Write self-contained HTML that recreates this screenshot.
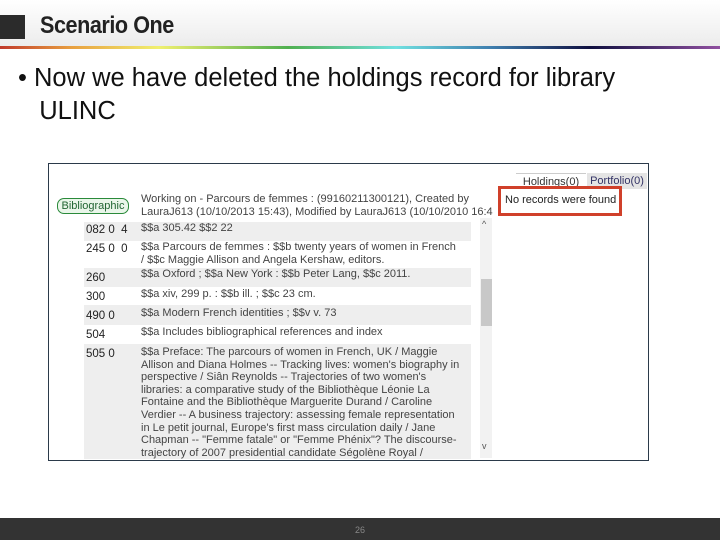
<!DOCTYPE html>
<html><head><meta charset="utf-8"><style>
body{margin:0;width:720px;height:540px;position:relative;overflow:hidden;background:#fff;font-family:"Liberation Sans",sans-serif}
.a{position:absolute}
.hdr{left:0;top:0;width:720px;height:46px;background:linear-gradient(#fff,#ececec)}
.bar{left:0;top:46px;width:720px;height:3px;background:linear-gradient(90deg,#c0392b,#e8a040 10%,#f0f070 22%,#50b050 40%,#70e0e0 55%,#4080b0 68%,#101040 82%,#9050a0 100%)}
.t{font-size:11px;color:#444;line-height:12.6px;white-space:nowrap;overflow:hidden}
.w{width:338px}
.n{font-size:11.5px;color:#222;left:86px}
.g{background:#eee;left:84px;width:387px}
</style></head><body>
<div class="a hdr"></div>
<div class="a" style="left:0;top:15px;width:25px;height:24px;background:#2b2b2b"></div>
<div class="a" style="left:40px;top:12px;font-size:24px;color:#222;font-weight:bold;letter-spacing:-0.5px;transform:scaleX(0.9);transform-origin:left">Scenario One</div>
<div class="a bar"></div>
<div class="a" style="left:18px;top:62px;font-size:25.5px;color:#111;line-height:33px">• Now we have deleted the holdings record for library<br>&nbsp;&nbsp;&nbsp;ULINC</div>

<div class="a" style="left:48px;top:163px;width:599px;height:296px;border:1px solid #2b3a4a;background:#fff"></div>
<div class="a g" style="top:222px;height:19px"></div>
<div class="a g" style="top:268px;height:19px"></div>
<div class="a g" style="top:305px;height:20px"></div>
<div class="a g" style="top:344px;height:115px"></div>
<div class="a" style="left:57px;top:198px;width:70px;height:14px;border:1px solid #2a8a3a;border-radius:7px;background:#eaf6ea;font-size:11px;color:#226633;text-align:center;line-height:14px">Bibliographic</div>
<div class="a t" style="left:141px;top:193px;width:352px">Working on - Parcours de femmes : (99160211300121), Created by<br>LauraJ613 (10/10/2013 15:43), Modified by LauraJ613 (10/10/2010 16:40)</div>
<div class="a n t" style="top:224px">082 0 &nbsp;4</div>
<div class="a n t" style="top:243px">245 0 &nbsp;0</div>
<div class="a n t" style="top:272px">260</div>
<div class="a n t" style="top:291px">300</div>
<div class="a n t" style="top:310px">490 0</div>
<div class="a n t" style="top:329px">504</div>
<div class="a n t" style="top:348px">505 0</div>
<div class="a t w" style="left:141px;top:222px">$$a 305.42 $$2 22</div>
<div class="a t w" style="left:141px;top:241px">$$a Parcours de femmes : $$b twenty years of women in French<br>/ $$c Maggie Allison and Angela Kershaw, editors.</div>
<div class="a t w" style="left:141px;top:268px">$$a Oxford ; $$a New York : $$b Peter Lang, $$c 2011.</div>
<div class="a t w" style="left:141px;top:288px">$$a xiv, 299 p. : $$b ill. ; $$c 23 cm.</div>
<div class="a t w" style="left:141px;top:307px">$$a Modern French identities ; $$v v. 73</div>
<div class="a t w" style="left:141px;top:326px">$$a Includes bibliographical references and index</div>
<div class="a t w" style="left:141px;top:346px;height:113px">$$a Preface: The parcours of women in French, UK / Maggie<br>Allison and Diana Holmes -- Tracking lives: women's biography in<br>perspective / Siân Reynolds -- Trajectories of two women's<br>libraries: a comparative study of the Bibliothèque Léonie La<br>Fontaine and the Bibliothèque Marguerite Durand / Caroline<br>Verdier -- A business trajectory: assessing female representation<br>in Le petit journal, Europe's first mass circulation daily / Jane<br>Chapman -- "Femme fatale" or "Femme Phénix"? The discourse-<br>trajectory of 2007 presidential candidate Ségolène Royal /</div>
<div class="a" style="left:480px;top:218px;width:12px;height:240px;background:#f2f2f2"></div>
<div class="a" style="left:481px;top:279px;width:11px;height:47px;background:#c8c8c8"></div>
<div class="a" style="left:482px;top:219px;font-size:9px;color:#555">^</div>
<div class="a" style="left:482px;top:441px;font-size:9px;color:#555">v</div>
<div class="a" style="left:493px;top:164px;width:154px;height:295px;background:#fff"></div>
<div class="a" style="left:516px;top:173px;width:70px;height:16px;border-top:1px solid #ccc;font-size:11px;color:#333;text-align:center;line-height:16px">Holdings(0)</div>
<div class="a" style="left:587px;top:173px;width:60px;height:16px;background:#e4e4e4;font-size:11px;color:#336;text-align:center;line-height:16px">Portfolio(0)</div>
<div class="a" style="left:498px;top:186px;width:118px;height:24px;border:3px solid #d0402a;background:#fff"></div>
<div class="a" style="left:505px;top:194px;font-size:11px;color:#222">No records were found</div>

<div class="a" style="left:0;top:518px;width:720px;height:22px;background:#333"></div>
<div class="a" style="left:355px;top:525px;font-size:9px;color:#888">26</div>
</body></html>
